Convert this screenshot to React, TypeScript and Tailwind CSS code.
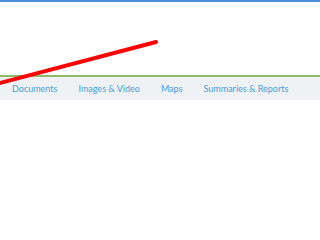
export default function App() {
  const tabs = ["Documents", "Images & Video", "Maps", "Summaries & Reports"];
  return (
    <div className="relative h-[240px] w-[320px] overflow-hidden bg-white font-['Lato',sans-serif]">
      <div className="h-[2px] bg-[#4a8fdb]" />
      <div className="h-[73px]" />
      <div className="h-[2px] bg-[#8dbb6a]" />
      <div className="flex h-[23px] items-center gap-[21px] bg-[#eff2f4] pl-[12px] text-[9px] text-[#4a9dd4]">
        {tabs.map((t) => (
          <span key={t}>{t}</span>
        ))}
      </div>
      <svg className="absolute left-0 top-0" width="320" height="240">
        <line x1="-4" y1="84" x2="156" y2="42" stroke="#ff0000" strokeWidth="4" strokeLinecap="round" />
      </svg>
    </div>
  );
}
